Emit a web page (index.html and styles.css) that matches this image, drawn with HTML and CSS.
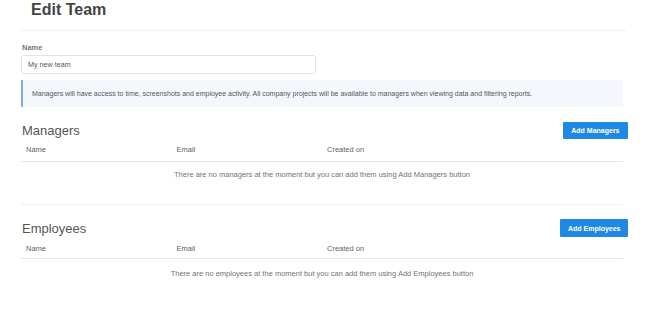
FILE: index.html
```html
<!DOCTYPE html>
<html>
<head>
<meta charset="utf-8">
<link rel="stylesheet" href="styles.css">
</head>
<body>
<div class="page">
  <h1 class="title">Edit Team</h1>
  <div class="rule"></div>
  <div class="content">
    <label class="label">Name</label>
    <div class="input">My new team</div>
    <div class="info">Managers will have access to time, screenshots and employee activity. All company projects will be available to managers when viewing data and filtering reports.</div>

    <section class="section">
      <div class="section-head">
        <h2 class="section-title">Managers</h2>
        <button class="btn">Add Managers</button>
      </div>
      <div class="table">
        <div class="thead">
          <div class="th">Name</div>
          <div class="th">Email</div>
          <div class="th">Created on</div>
          <div class="th"></div>
        </div>
        <div class="empty">There are no managers at the moment but you can add them using Add Managers button</div>
      </div>
    </section>
    <div class="sep"></div>
    <section class="section second">
      <div class="section-head">
        <h2 class="section-title">Employees</h2>
        <button class="btn">Add Employees</button>
      </div>
      <div class="table">
        <div class="thead">
          <div class="th">Name</div>
          <div class="th">Email</div>
          <div class="th">Created on</div>
          <div class="th"></div>
        </div>
        <div class="empty">There are no employees at the moment but you can add them using Add Employees button</div>
      </div>
    </section>
  </div>
</div>
</body>
</html>
```

FILE: styles.css
```css
* { box-sizing: border-box; }
html, body { margin: 0; padding: 0; background: #fff; }
body { font-family: "Liberation Sans", Arial, sans-serif; color: #666; }
.page { width: 646px; }
.title {
  margin: 0 0 0 31px;
  font-size: 16px;
  line-height: 20px;
  font-weight: bold;
  color: #444;
}
.rule {
  margin: 10px 20px 0 20px;
  height: 1px;
  background: #f0f0f0;
}
.content { padding: 12px 23px 0 21px; }
.label {
  display: block;
  margin-left: 1px;
  font-size: 7.5px;
  line-height: 10px;
  font-weight: bold;
  color: #7a7a7a;
}
.input {
  margin-top: 2px;
  width: 295px;
  height: 19px;
  border: 1px solid #e3e3e3;
  border-radius: 3px;
  padding: 0 6px;
  font-size: 7.2px;
  line-height: 17px;
  color: #555;
}
.info {
  margin-top: 6px;
  height: 27px;
  background: #f4f8fc;
  border-left: 2px solid #80aee4;
  padding: 0 9px;
  font-size: 7px;
  line-height: 27px;
  color: #555;
  white-space: nowrap;
}
.section { margin-top: 15px; }
.section.second { margin-top: 14px; }
.second .section-head { height: 18px; }
.second .th { padding-top: 7px; padding-bottom: 4px; }
.second .empty { padding-top: 10px; }
.section-head {
  display: flex;
  align-items: center;
  justify-content: space-between;
  height: 17px;
}
.section-title {
  margin: 0 0 0 1px;
  font-size: 13px;
  line-height: 17px;
  font-weight: normal;
  color: #555;
}
.btn {
  margin-right: -5px;
  height: 17px;
  padding: 0 8.5px;
  border: 0;
  border-radius: 1px;
  background: #1f88e5;
  color: #fff;
  font-family: "Liberation Sans", Arial, sans-serif;
  font-size: 7px;
  font-weight: bold;
  line-height: 17px;
}
.second .btn { height: 18px; padding: 0 7.5px; }
.table { width: 602px; }
.thead {
  display: grid;
  grid-template-columns: repeat(4, 1fr);
  border-bottom: 1px solid #e6e6e6;
}
.th {
  padding: 6px 5px;
  font-size: 7.5px;
  line-height: 10px;
  color: #5f5f5f;
}
.empty {
  padding: 8px 0;
  text-align: center;
  font-size: 7.5px;
  line-height: 10px;
  color: #737373;
}
.sep {
  margin-top: 16px;
  width: 602px;
  height: 1px;
  background: #f0f0f0;
}
```
